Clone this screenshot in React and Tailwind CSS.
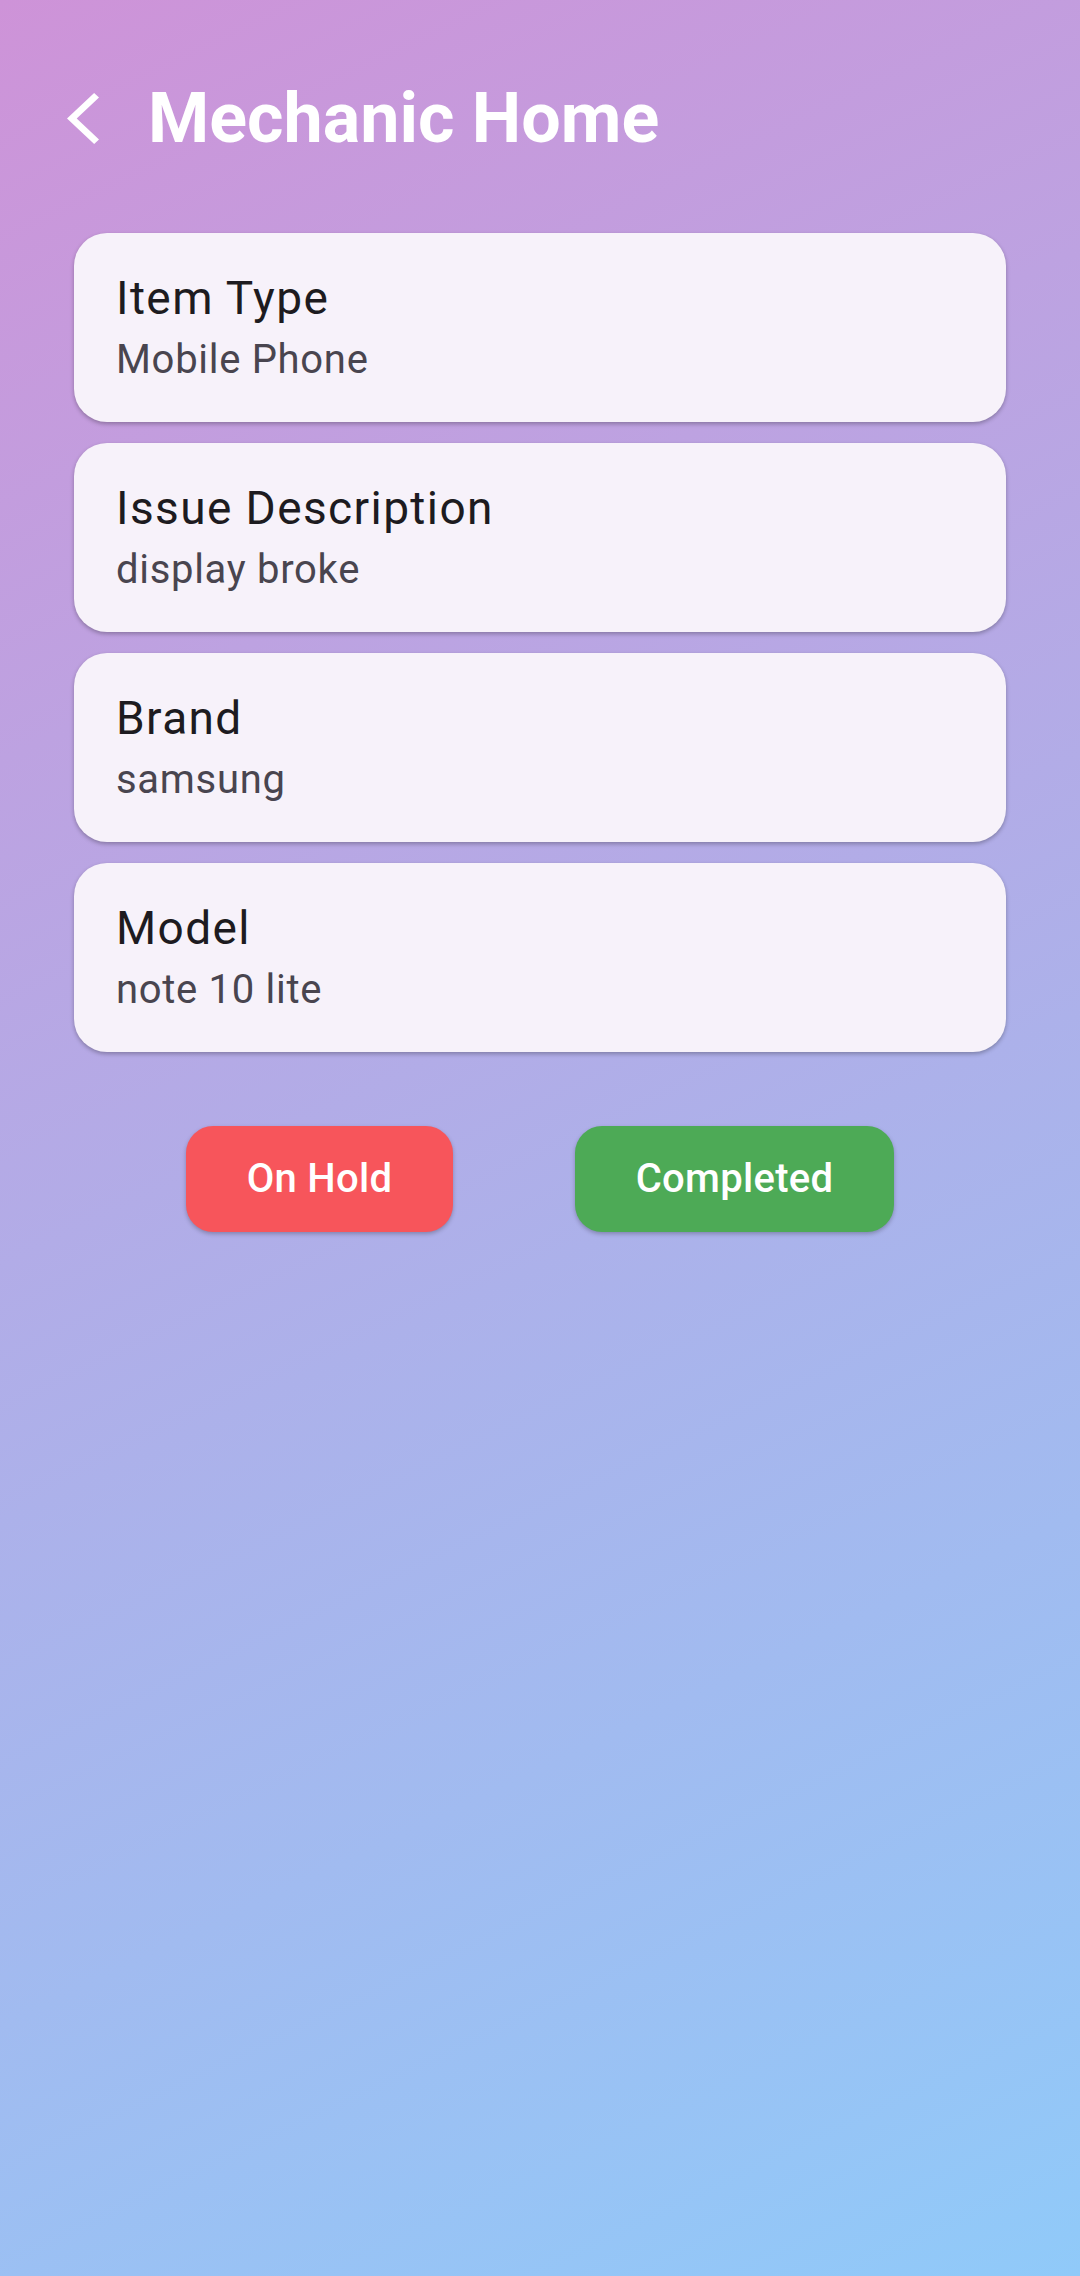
export default function App() {
  const items = [
    { title: "Item Type", value: "Mobile Phone" },
    { title: "Issue Description", value: "display broke" },
    { title: "Brand", value: "samsung" },
    { title: "Model", value: "note 10 lite" },
  ];
  return (
    <div
      className="w-[1080px] h-[2276px] overflow-hidden bg-[linear-gradient(154.6deg,#CE93D8,#90CAF9)]"
      style={{ fontFamily: "Roboto, 'Noto Sans', sans-serif" }}
    >
      <div className="flex items-center h-[70px] mt-[83px] pl-[67px]">
        <svg
          width="32"
          height="51"
          viewBox="5.84 2.1 11.67 19.8"
          preserveAspectRatio="none"
          className="shrink-0"
        >
          <path
            d="M17.51 3.87L15.73 2.1 5.84 12l9.9 9.9 1.77-1.77L9.38 12l8.13-8.13z"
            fill="#ffffff"
          />
        </svg>
        <h1 className="ml-[49px] text-[70px] leading-[70px] font-bold text-white">
          Mechanic Home
        </h1>
      </div>

      <div className="mt-[80px] px-[74px] flex flex-col gap-[21px]">
        {items.map((it) => (
          <div
            key={it.title}
            className="h-[189px] rounded-[33px] bg-[#F7F2FA] shadow-[0_2px_4px_rgba(0,0,0,0.28)] pl-[42px] pt-[32px]"
          >
            <div className="text-[46px] leading-[66px] tracking-[1.4px] text-[#1D1B20]">
              {it.title}
            </div>
            <div className="text-[40px] leading-[55px] tracking-[0.7px] text-[#49454F] mt-[1px]">
              {it.value}
            </div>
          </div>
        ))}
      </div>

      <div className="mt-[74px] flex justify-center gap-[122px]">
        <button className="w-[267px] h-[106px] rounded-[27px] bg-[#F7555B] text-white text-[40px] font-medium tracking-[0.3px] shadow-[0_2px_4px_rgba(0,0,0,0.25)]">
          On Hold
        </button>
        <button className="w-[319px] h-[106px] rounded-[27px] bg-[#4DAA56] text-white text-[40px] font-medium tracking-[0.3px] shadow-[0_2px_4px_rgba(0,0,0,0.25)]">
          Completed
        </button>
      </div>
    </div>
  );
}
